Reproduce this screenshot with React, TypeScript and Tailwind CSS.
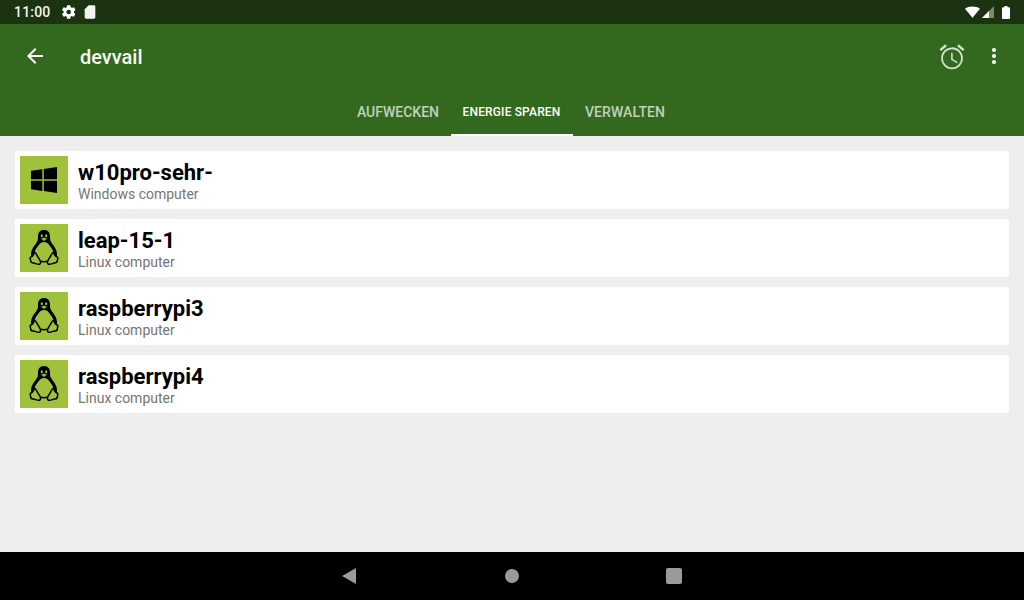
import React from "react";

const Tux = () => (
  <svg viewBox="0 0 48 48" className="w-12 h-12">
    <g transform="translate(0 -1.500)">
      <path d="M24 7.500c-4.300 0-6.200 3-6 7 .1 2.600-.4 4.400-2 6.500-2.500 3.100-5 6.900-5 10.700 0 1.300.3 2.500.8 3.500h24.400c.5-1 .8-2.200.8-3.500 0-3.800-2.500-7.600-5-10.700-1.600-2.100-2.100-3.900-2-6.500.2-4-1.700-7-6-7z" fill="#000" />
      <path d="M24 19.500c-2.500 0-3.700 1-4.800 2.500-2 2.700-5 6-5 9.400 0 2.600 2.800 4.800 9.800 4.800s9.800-2.200 9.800-4.800c0-3.400-3-6.700-5-9.400-1.100-1.500-2.300-2.500-4.800-2.500z" fill="#a0c23a" />
      <path d="M21.800 11.800a1.100 1.500 0 1 1-.01 0zM26.200 11.800a1.100 1.500 0 1 1-.01 0z" fill="#a0c23a" />
      <path d="M20.500 16.200l3.500-1.400 3.500 1.400-3.500 2.500z" fill="#a0c23a" stroke="#000" strokeWidth=".6" />
      <path d="M14.500 29.500c-1 2.500-.8 3.500-2.300 4.200-1.500.6-2.300 1-2.100 2 .2 1.100.7 2 .6 3-.1 1.200 1 1.500 2.500 1.700 2 .3 3.700 1.400 5.200 1.400 1.600 0 2.400-1 2.200-2.300-.2-1.500-2-4-3-5.600-.8-1.300-1.600-3.400-3.100-4.400z" fill="#a0c23a" stroke="#000" strokeWidth="1.500" strokeLinejoin="round" />
      <path d="M33.500 29.500c1 2.500.8 3.500 2.300 4.200 1.500.6 2.300 1 2.100 2-.2 1.100-.7 2-.6 3 .1 1.200-1 1.500-2.500 1.700-2 .3-3.700 1.400-5.200 1.400-1.600 0-2.400-1-2.200-2.300.2-1.500 2-4 3-5.600.8-1.300 1.600-3.400 3.100-4.400z" fill="#a0c23a" stroke="#000" strokeWidth="1.500" strokeLinejoin="round" />
      <path d="M20.500 38.800c2.300.5 4.700.5 7 0" fill="none" stroke="#000" strokeWidth="1.500" />
    </g>
  </svg>
);

const Win = () => (
  <svg viewBox="0 0 48 48" className="w-12 h-12">
    <path d="M11 14.800l11.300-1.600v10.100H11zM23.800 13L37 11.100v12.200H23.800zM11 24.800h11.300v10.100L11 33.300zM23.800 24.800H37v12.100l-13.200-1.800z" fill="#000" />
  </svg>
);

const rows = [
  { name: "w10pro-sehr-", sub: "Windows computer", win: true },
  { name: "leap-15-1", sub: "Linux computer", win: false },
  { name: "raspberrypi3", sub: "Linux computer", win: false },
  { name: "raspberrypi4", sub: "Linux computer", win: false },
];

export default function App() {
  return (
    <div className="w-[1024px] h-[600px] flex flex-col bg-[#eeeeee] overflow-hidden font-['Roboto',sans-serif]">
      <div className="h-6 bg-[#1b3310] flex items-center text-white shrink-0">
        <span className="ml-[14px] text-[14px] font-medium tracking-[0.2px] text-[#f2f4f0]">11:00</span>
        <svg viewBox="0 0 24 24" className="w-4 h-4 ml-[10px]" fill="#fff">
          <path d="M19.400 13c.04-.33.06-.66.06-1s-.02-.67-.07-1l2.160-1.650c.2-.15.250-.42.120-.64l-2.050-3.550c-.12-.22-.39-.3-.61-.22l-2.550 1.020c-.53-.4-1.100-.73-1.730-.98L14 2.420A.5.5 0 0 0 13.500 2h-4a.5.5 0 0 0-.5.420l-.38 2.560c-.63.25-1.200.59-1.730.98L4.340 4.940c-.23-.09-.49 0-.61.22L1.680 8.710c-.13.220-.07.490.12.640L3.960 11c-.05.330-.08.670-.08 1s.02.670.07 1l-2.160 1.650c-.2.150-.25.420-.12.640l2.050 3.550c.12.220.39.300.61.220l2.550-1.020c.53.400 1.100.730 1.730.980L9 21.580c.05.240.25.420.5.420h4c.25 0 .460-.18.490-.42l.38-2.560c.63-.25 1.200-.59 1.730-.98l2.550 1.020c.23.090.49 0 .61-.22l2.050-3.550c.13-.22.070-.49-.12-.64zM11.500 15.500a3.500 3.500 0 1 1 0-7 3.500 3.500 0 0 1 0 7z" />
        </svg>
        <svg viewBox="0 0 24 24" className="w-4 h-4 ml-[5px]" fill="#f2f4f0">
          <path d="M18 2h-8L4 8v12c0 1.100.9 2 2 2h12c1.100 0 2-.9 2-2V4c0-1.100-.9-2-2-2z" />
        </svg>
        <div className="ml-auto flex items-center">
          <svg viewBox="0 0 16 12" className="w-[15px] h-3" fill="#fff">
            <path d="M8 12L0 2.500C2 .9 4.800 0 8 0s6 .9 8 2.500z" />
          </svg>
          <svg viewBox="0 0 12 12" className="w-3 h-3 ml-[2px]">
            <path d="M12 0v12H0z" fill="#7d8a76" />
            <path d="M7 5v7H0z" fill="#fff" />
          </svg>
          <svg viewBox="0 0 8 13" className="w-2 h-[13px] ml-[8px] mr-[14px]" fill="#fff">
            <path d="M2.500 0h3v1.300H7a1 1 0 0 1 1 1V12a1 1 0 0 1-1 1H1a1 1 0 0 1-1-1V2.300a1 1 0 0 1 1-1h1.500z" />
          </svg>
        </div>
      </div>

      <div className="h-[112px] bg-[#33691e] shrink-0 flex flex-col">
        <div className="h-16 flex items-center text-white shrink-0">
          <svg viewBox="0 0 24 24" className="w-6 h-6 ml-[23px]" fill="#fff">
            <path d="M20 11H7.830l5.590-5.590L12 4l-8 8 8 8 1.410-1.410L7.830 13H20z" />
          </svg>
          <span className="ml-[33px] text-[20px] font-medium text-[#f8faf6] pt-[2px]">devvail</span>
          <svg viewBox="0 0 24 24" className="w-[30px] h-[30px] ml-auto mt-[2px]" fill="#d6e1d0">
            <path d="M22 5.720l-4.600-3.860-1.290 1.530 4.600 3.860zM7.880 3.390L6.600 1.860 2 5.710l1.290 1.530zM12.500 8.500H11.300v5.700l4.600 2.750.6-1-3.900-2.300zM12 4.300a8.700 8.700 0 1 0 .01 17.400A8.700 8.700 0 0 0 12 4.300zm0 16a7.300 7.300 0 1 1 0-14.600 7.300 7.300 0 0 1 0 14.600z" />
          </svg>
          <svg viewBox="0 0 24 24" className="w-6 h-6 ml-[15px] mr-[18px]" fill="#fff">
            <circle cx="12" cy="6" r="2" />
            <circle cx="12" cy="12" r="2" />
            <circle cx="12" cy="18" r="2" />
          </svg>
        </div>
        <div className="h-12 flex justify-center pr-[2px]">
          <div className="w-[106px] pl-[1px] flex items-center justify-center text-[14px] font-medium text-[#c3d0bc]">AUFWECKEN</div>
          <div className="w-[122px] flex items-center justify-center text-[12px] font-medium tracking-[0.15px] text-white border-b-2 border-white pt-[2px]">ENERGIE SPAREN</div>
          <div className="w-[105px] flex items-center justify-center text-[14px] tracking-[0.1px] font-medium text-[#c3d0bc]">VERWALTEN</div>
        </div>
      </div>

      <div className="flex-1 flex flex-col gap-[10px] px-[15px] pt-[15px]">
        {rows.map((r) => (
          <div key={r.name} className="h-[58px] bg-white flex items-center pl-[5px]">
            <div className="w-12 h-12 bg-[#a0c23a]">{r.win ? <Win /> : <Tux />}</div>
            <div className="ml-[10px] flex flex-col pt-[2px]">
              <span className="text-[22px] leading-[26px] font-bold text-black pt-[1px] -mb-[1px]">{r.name}</span>
              <span className="text-[14px] leading-[18px] text-[#757575]">{r.sub}</span>
            </div>
          </div>
        ))}
      </div>

      <div className="h-12 bg-black shrink-0 flex items-center justify-center pr-[1px]">
        <svg viewBox="0 0 16 16" className="w-4 h-4" fill="#9a9a9a">
          <path d="M15 0v16L1 8z" />
        </svg>
        <div className="w-[14px] h-[14px] rounded-full bg-[#9a9a9a] ml-[148px]" />
        <div className="w-4 h-4 rounded-[2px] bg-[#9a9a9a] ml-[147px]" />
      </div>
    </div>
  );
}
